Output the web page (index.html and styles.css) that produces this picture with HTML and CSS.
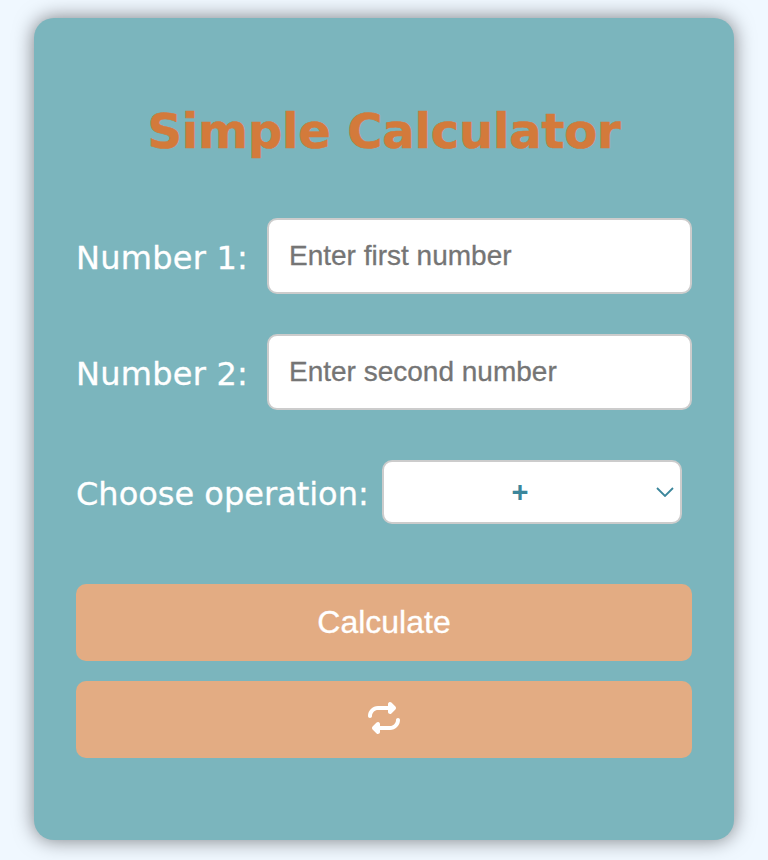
FILE: index.html
```html
<!DOCTYPE html>
<html lang="en">
<head>
<meta charset="utf-8">
<title>Simple Calculator</title>
<link rel="stylesheet" href="styles.css">
</head>
<body>
<main class="calculator">
  <h1 class="title">Simple Calculator</h1>
  <div class="row">
    <label for="n1" class="label label-number">Number 1:</label>
    <input id="n1" class="field" type="text" placeholder="Enter first number">
  </div>
  <div class="row">
    <label for="n2" class="label label-number">Number 2:</label>
    <input id="n2" class="field" type="text" placeholder="Enter second number">
  </div>
  <div class="row row-operation">
    <span class="label">Choose operation:</span>
    <div class="select">
      <span class="operator">+</span>
      <svg class="chevron" viewBox="0 0 18 10"><path d="M1 1l8 8 8-8"/></svg>
    </div>
  </div>
  <button class="button">Calculate</button>
  <button class="button button-reset" aria-label="Reset">
    <svg class="repeat" viewBox="0 0 512 512"><path d="M0 224c0 17.700 14.300 32 32 32s32-14.300 32-32c0-53 43-96 96-96h160v32c0 12.900 7.800 24.600 19.800 29.600s25.700 2.200 34.900-6.900l64-64c12.500-12.500 12.500-32.800 0-45.300l-64-64c-9.200-9.200-22.900-11.900-34.900-6.900S320 19.100 320 32v32H160C71.600 64 0 135.600 0 224zm512 64c0-17.700-14.300-32-32-32s-32 14.300-32 32c0 53-43 96-96 96H192v-32c0-12.900-7.800-24.600-19.800-29.600s-25.700-2.200-34.900 6.900l-64 64c-12.500 12.500-12.500 32.800 0 45.300l64 64c9.200 9.200 22.900 11.900 34.900 6.900S192 492.900 192 480v-32h160c88.400 0 160-71.600 160-160z"/></svg>
  </button>
</main>
</body>
</html>
```
FILE: styles.css
```css
* { box-sizing: border-box; }
body {
  margin: 0;
  height: 860px;
  overflow: hidden;
  padding: 18px 34px;
  background: #f0f8ff;
  font-family: "DejaVu Sans", sans-serif;
}
.calculator {
  height: 822px;
  padding: 82px 42px 0;
  border-radius: 20px;
  background: #7bb5bd;
  box-shadow: 0 0 20px rgba(0, 0, 0, 0.5);
}
.title {
  margin: 0 0 60px;
  height: 58px;
  line-height: 62px;
  font-size: 48px;
  font-weight: bold;
  letter-spacing: -0.18px;
  text-align: center;
  white-space: nowrap;
  color: #d37a3b;
  -webkit-text-stroke: 0.6px #d37a3b;
}
.row {
  display: flex;
  align-items: center;
  justify-content: space-between;
  height: 76px;
  margin-bottom: 40px;
}
.label {
  padding-top: 3px;
  color: #fff;
  font-size: 32px;
  white-space: nowrap;
  -webkit-text-stroke: 0.3px #fff;
}
.label-number { letter-spacing: 0.25px; }
.field {
  width: 425px;
  height: 76px;
  padding: 0 20px 1px;
  border: 2px solid #ccc;
  border-radius: 10px;
  background: #fff;
  font: 28px "Liberation Sans", sans-serif;
}
.field::placeholder {
  color: #757575;
  opacity: 1;
  -webkit-text-stroke: 0.3px #757575;
}
.row-operation {
  height: 64px;
  margin: 50px 10px 60px 0;
}
.select {
  position: relative;
  display: flex;
  align-items: center;
  justify-content: center;
  width: 300px;
  height: 64px;
  padding-right: 24px;
  border: 2px solid #ccc;
  border-radius: 10px;
  background: #fff;
}
.operator {
  color: #3b869b;
  font: bold 29px "Liberation Sans", sans-serif;
}
.chevron {
  position: absolute;
  right: 6px;
  top: 25px;
  width: 18px;
  height: 10px;
  fill: none;
  stroke: #3b869b;
  stroke-width: 1.8;
}
.button {
  display: flex;
  align-items: center;
  justify-content: center;
  width: 100%;
  height: 77px;
  margin: 0 0 20px;
  padding: 0;
  border: 0;
  border-radius: 10px;
  background: #e3ac83;
  color: #fff;
  font: 32px "Liberation Sans", sans-serif;
  -webkit-text-stroke: 0.3px #fff;
}
.button-reset { padding-bottom: 4px; }
.repeat { width: 32px; height: 32px; fill: #fff; }
```
